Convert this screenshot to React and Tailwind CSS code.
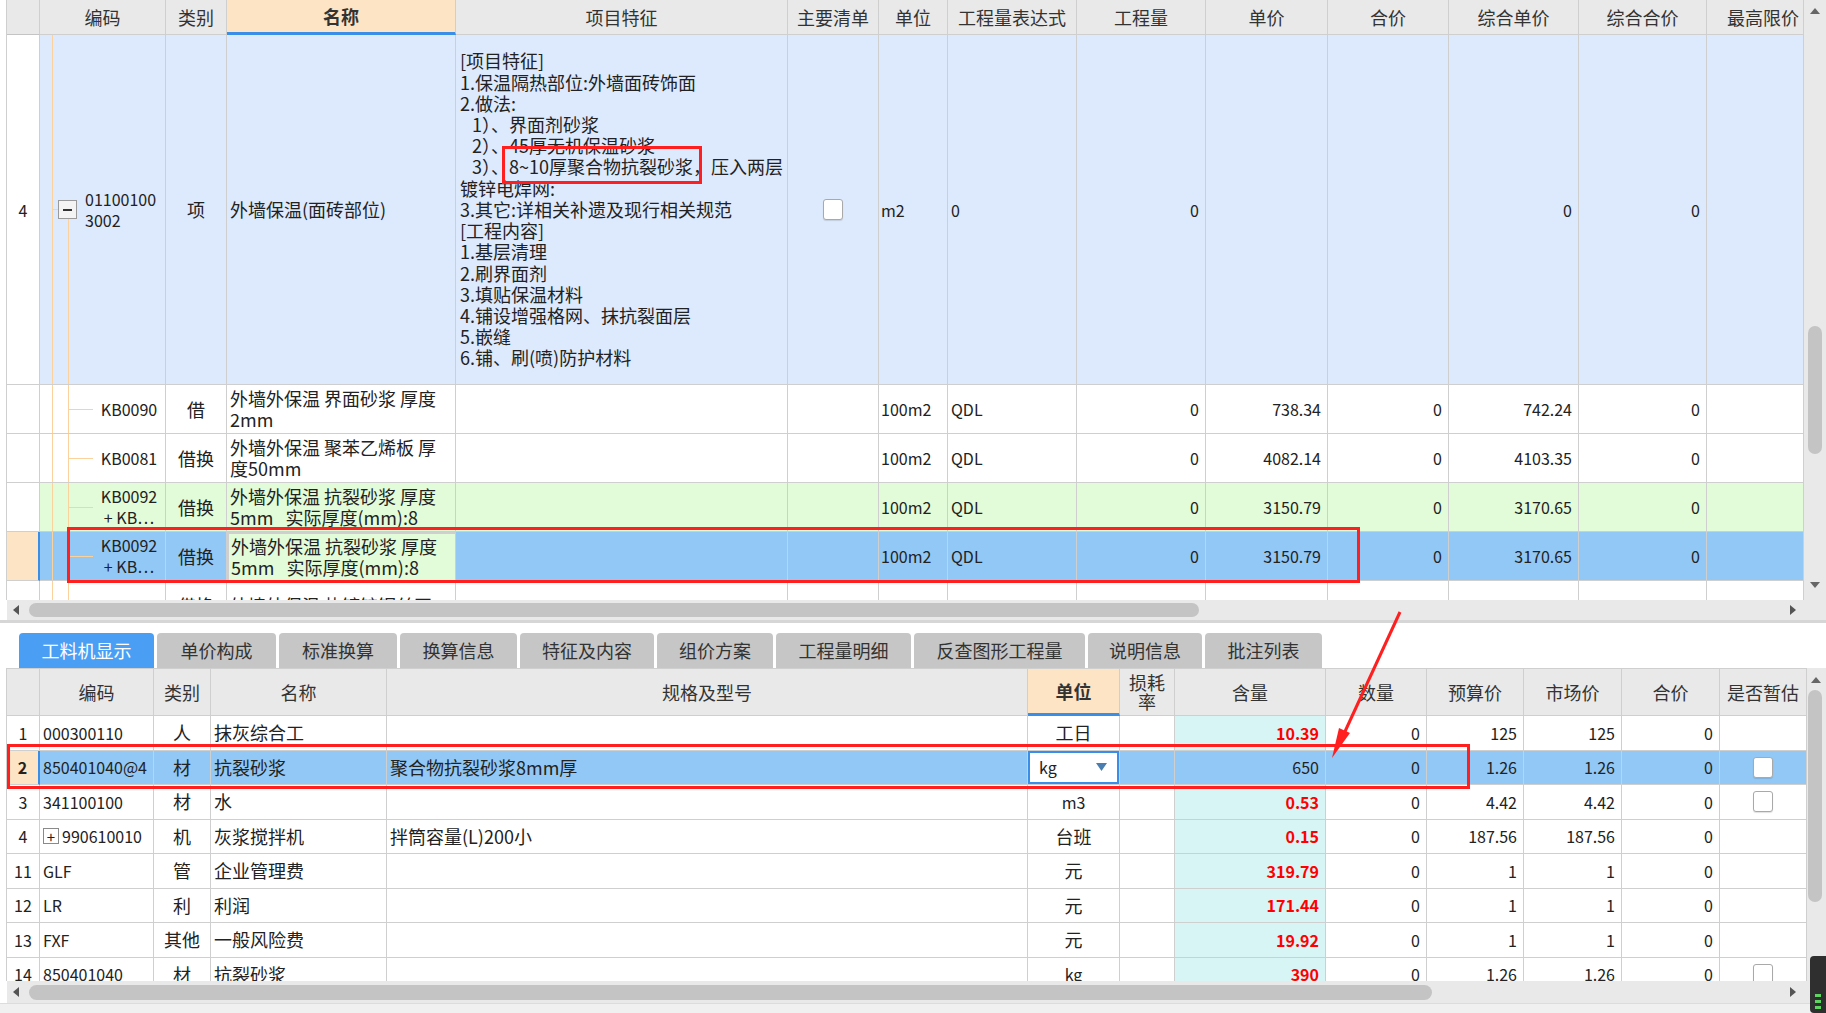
import React from "react";

const F = "font-['Noto_Sans_CJK_SC',sans-serif]";
const TOP =
  "grid grid-cols-[33px_126px_61px_229px_332px_91px_69px_129px_129px_122px_121px_130px_128px_97px]";
const LOW =
  "grid grid-cols-[33px_114px_57px_176px_641px_92px_55px_151px_101px_97px_98px_98px_87px]";
const cell = "border-r border-b border-[#cfcfcf] overflow-hidden flex items-center min-w-0 whitespace-nowrap";
const num = "justify-end pr-[6px] text-[16px]";

function Tri({ dir }) {
  if (dir === "up")
    return (
      <svg width="10" height="6" viewBox="0 0 10 6">
        <polygon points="0,6 5,0 10,6" fill="#666" />
      </svg>
    );
  if (dir === "down")
    return (
      <svg width="10" height="6" viewBox="0 0 10 6">
        <polygon points="0,0 10,0 5,6" fill="#666" />
      </svg>
    );
  if (dir === "left")
    return (
      <svg width="6" height="10" viewBox="0 0 6 10">
        <polygon points="6,0 6,10 0,5" fill="#555" />
      </svg>
    );
  return (
    <svg width="6" height="10" viewBox="0 0 6 10">
      <polygon points="0,0 0,10 6,5" fill="#555" />
    </svg>
  );
}

function Checkbox() {
  return (
    <div className="w-[20px] h-[21px] bg-white border border-[#a9a9a9] rounded-[3px] shadow-[0_1px_1px_rgba(0,0,0,0.12)]" />
  );
}

// [text, indented]
const featureLines = [
  ["[项目特征]", false],
  ["1.保温隔热部位:外墙面砖饰面", false],
  ["2.做法:", false],
  ["1）、界面剂砂浆", true],
  ["2）、45厚无机保温砂浆", true],
  ["3）、8~10厚聚合物抗裂砂浆，压入两层", true],
  ["镀锌电焊网:", false],
  ["3.其它:详相关补遗及现行相关规范", false],
  ["[工程内容]", false],
  ["1.基层清理", false],
  ["2.刷界面剂", false],
  ["3.填贴保温材料", false],
  ["4.铺设增强格网、抹抗裂面层", false],
  ["5.嵌缝", false],
  ["6.铺、刷(喷)防护材料", false],
];

const topRows = [
  { code: ["KB0090"], type: "借", name: ["外墙外保温 界面砂浆 厚度", "2mm"], price: "738.34", cprice: "742.24", bg: "bg-white" },
  { code: ["KB0081"], type: "借换", name: ["外墙外保温 聚苯乙烯板 厚", "度50mm"], price: "4082.14", cprice: "4103.35", bg: "bg-white" },
  { code: ["KB0092", "+ KB…"], type: "借换", name: ["外墙外保温 抗裂砂浆 厚度", "5mm   实际厚度(mm):8"], price: "3150.79", cprice: "3170.65", bg: "bg-[#e2fbd8]" },
  { code: ["KB0092", "+ KB…"], type: "借换", name: ["外墙外保温 抗裂砂浆 厚度", "5mm   实际厚度(mm):8"], price: "3150.79", cprice: "3170.65", bg: "bg-[#92c8f5]", sel: true },
  { code: ["KB0094"], type: "借换", name: ["外墙外保温 热镀锌钢丝网", ""], price: "1155.92", cprice: "1160.87", bg: "bg-white" },
];

const lowRows = [
  { n: "1", code: "000300110", t: "人", name: "抹灰综合工", spec: "", unit: "工日", amt: "10.39", bp: "125", mp: "125" },
  { n: "2", code: "850401040@4", t: "材", name: "抗裂砂浆", spec: "聚合物抗裂砂浆8mm厚", unit: "kg", amt: "650", bp: "1.26", mp: "1.26", sel: true, cb: true },
  { n: "3", code: "341100100", t: "材", name: "水", spec: "", unit: "m3", amt: "0.53", bp: "4.42", mp: "4.42", cb: true },
  { n: "4", code: "990610010", plus: true, t: "机", name: "灰浆搅拌机", spec: "拌筒容量(L)200小", unit: "台班", amt: "0.15", bp: "187.56", mp: "187.56" },
  { n: "11", code: "GLF", t: "管", name: "企业管理费", spec: "", unit: "元", amt: "319.79", bp: "1", mp: "1" },
  { n: "12", code: "LR", t: "利", name: "利润", spec: "", unit: "元", amt: "171.44", bp: "1", mp: "1" },
  { n: "13", code: "FXF", t: "其他", name: "一般风险费", spec: "", unit: "元", amt: "19.92", bp: "1", mp: "1" },
  { n: "14", code: "850401040", t: "材", name: "抗裂砂浆", spec: "", unit: "kg", amt: "390", bp: "1.26", mp: "1.26", cb: true },
];

const tabs = [
  ["工料机显示", "w-[135px]"],
  ["单价构成", "w-[119px]"],
  ["标准换算", "w-[118px]"],
  ["换算信息", "w-[117px]"],
  ["特征及内容", "w-[134px]"],
  ["组价方案", "w-[116px]"],
  ["工程量明细", "w-[135px]"],
  ["反查图形工程量", "w-[171px]"],
  ["说明信息", "w-[114px]"],
  ["批注列表", "w-[117px]"],
];

function TopTable() {
  return (
    <div className="border-l border-[#cfcfcf]">
      {/* header */}
      <div className={`${TOP} h-[35px] bg-[#e9e9e9] text-[18px] text-[#333]`}>
        <div className={`${cell} border-b-[#c4c4c4]`} />
        <div className={`${cell} justify-center`}>编码</div>
        <div className={`${cell} justify-center`}>类别</div>
        <div className={`${cell} justify-center bg-[#fde4c4] font-bold border-b-[3px] border-b-[#3b8ee8]`}>名称</div>
        <div className={`${cell} justify-center`}>项目特征</div>
        <div className={`${cell} justify-center`}>主要清单</div>
        <div className={`${cell} justify-center`}>单位</div>
        <div className={`${cell} justify-center`}>工程量表达式</div>
        <div className={`${cell} justify-center`}>工程量</div>
        <div className={`${cell} justify-center`}>单价</div>
        <div className={`${cell} justify-center`}>合价</div>
        <div className={`${cell} justify-center`}>综合单价</div>
        <div className={`${cell} justify-center`}>综合合价</div>
        <div className={`${cell} justify-end pr-[4px]`}>最高限价</div>
      </div>

      {/* item row 4 */}
      <div className={`${TOP} h-[350px] bg-[#dde9fc] text-[18px] text-[#222]`}>
        <div className={`${cell} justify-center bg-white text-[16px]`}>4</div>
        <div className={`${cell} relative`}>
          <span className="absolute left-[12px] top-0 bottom-0 w-px bg-[#fbd29c]" />
          <span className="absolute left-[12px] top-[174px] w-[6px] h-px bg-[#fbd29c]" />
          <span className="absolute left-[18px] top-[165px] w-[19px] h-[19px] bg-[#f4f4f4] border border-[#9a9a9a] flex items-center justify-center">
            <span className="w-[9px] h-[2px] bg-[#333]" />
          </span>
          <span className="absolute left-[28px] top-[184px] bottom-0 w-px bg-[#fbd29c]" />
          <div className="ml-[45px] text-[16px] leading-[21px]">
            <div>01100100</div>
            <div>3002</div>
          </div>
        </div>
        <div className={`${cell} justify-center`}>项</div>
        <div className={`${cell} pl-[3px]`}>外墙保温(面砖部位)</div>
        <div className={`${cell} pl-[4px]`}>
          <div className="leading-[21.2px] whitespace-pre">
            {featureLines.map(([l, ind], i) => (
              <div key={i} className={ind ? "pl-[12px]" : ""}>
                {l}
              </div>
            ))}
          </div>
        </div>
        <div className={`${cell} justify-center`}>
          <Checkbox />
        </div>
        <div className={`${cell} pl-[2px] text-[16px]`}>m2</div>
        <div className={`${cell} pl-[3px] text-[16px]`}>0</div>
        <div className={`${cell} ${num}`}>0</div>
        <div className={cell} />
        <div className={cell} />
        <div className={`${cell} ${num}`}>0</div>
        <div className={`${cell} ${num}`}>0</div>
        <div className={cell} />
      </div>

      {topRows.map((r, i) => (
        <div key={i} className={`${TOP} h-[49px] ${r.bg} text-[18px] text-[#222]`}>
          <div
            className={
              r.sel
                ? `${cell} bg-[#fde4c4] border-r-[2px] border-r-[#3b8ee8]`
                : `${cell} bg-white`
            }
          />
          <div className={`${cell} relative`}>
            <span className="absolute left-[12px] top-0 bottom-0 w-px bg-[#fbd29c]" />
            <span className="absolute left-[28px] top-0 bottom-0 w-px bg-[#fbd29c]" />
            <span className="absolute left-[28px] top-[24px] w-[25px] h-px bg-[#fbd29c]" />
            <div className="ml-[53px] flex-1 text-center text-[16px] leading-[21px]">
              {r.code.map((c, j) => (
                <div key={j}>{c}</div>
              ))}
            </div>
          </div>
          <div className={`${cell} justify-center`}>{r.type}</div>
          <div
            className={
              r.sel
                ? `${cell} pl-[2px] bg-[#e2fbd8] border-[2px] border-[#7a7a7a]`
                : `${cell} pl-[3px]`
            }
          >
            <div className="leading-[21px] whitespace-pre">
              <div>{r.name[0]}</div>
              <div>{r.name[1]}</div>
            </div>
          </div>
          <div className={cell} />
          <div className={cell} />
          <div className={`${cell} pl-[2px] text-[16px]`}>100m2</div>
          <div className={`${cell} pl-[3px] text-[16px]`}>QDL</div>
          <div className={`${cell} ${num}`}>0</div>
          <div className={`${cell} ${num}`}>{r.price}</div>
          <div className={`${cell} ${num}`}>0</div>
          <div className={`${cell} ${num}`}>{r.cprice}</div>
          <div className={`${cell} ${num}`}>0</div>
          <div className={cell} />
        </div>
      ))}
    </div>
  );
}

function LowTable() {
  return (
    <div className="border-l border-t border-[#cfcfcf]">
      <div className={`${LOW} h-[47px] bg-[#e9e9e9] text-[18px] text-[#333]`}>
        <div className={cell} />
        <div className={`${cell} justify-center`}>编码</div>
        <div className={`${cell} justify-center`}>类别</div>
        <div className={`${cell} justify-center`}>名称</div>
        <div className={`${cell} justify-center`}>规格及型号</div>
        <div className={`${cell} justify-center bg-[#fde4c4] font-bold border-b-[3px] border-b-[#3b8ee8]`}>单位</div>
        <div className={`${cell} justify-center text-center leading-[19px]`}>
          <div>
            <div>损耗</div>
            <div>率</div>
          </div>
        </div>
        <div className={`${cell} justify-center`}>含量</div>
        <div className={`${cell} justify-center`}>数量</div>
        <div className={`${cell} justify-center`}>预算价</div>
        <div className={`${cell} justify-center`}>市场价</div>
        <div className={`${cell} justify-center`}>合价</div>
        <div className={`${cell} justify-center`}>是否暂估</div>
      </div>
      {lowRows.map((r, i) => {
        const latinUnit = r.unit === "kg" || r.unit === "m3";
        return (
          <div
            key={i}
            className={`${LOW} h-[34.5px] text-[18px] text-[#222] ${r.sel ? "bg-[#92c8f5]" : "bg-white"}`}
          >
            <div
              className={
                r.sel
                  ? `${cell} justify-center bg-[#fde4c4] font-bold text-[16px] border-r-[2px] border-r-[#3b8ee8]`
                  : `${cell} justify-center text-[16px]`
              }
            >
              {r.n}
            </div>
            <div className={`${cell} pl-[3px] text-[16px]`}>
              {r.plus && (
                <span className="w-[16px] h-[16px] mr-[3px] border border-[#8a8a8a] bg-white flex items-center justify-center text-[15px] leading-none">
                  +
                </span>
              )}
              {r.code}
            </div>
            <div className={`${cell} justify-center`}>{r.t}</div>
            <div className={`${cell} pl-[3px]`}>{r.name}</div>
            <div className={`${cell} pl-[3px]`}>{r.spec}</div>
            <div className={`${cell} justify-center ${latinUnit ? "text-[16px]" : ""}`}>
              {r.sel ? (
                <div className="w-full h-full bg-white border-[2px] border-[#3b8ee8] flex items-center pl-[9px] pr-[10px]">
                  <span className="flex-1">kg</span>
                  <svg width="11" height="8" viewBox="0 0 11 8">
                    <polygon points="0,0 11,0 5.5,8" fill="#4a7db0" />
                  </svg>
                </div>
              ) : (
                r.unit
              )}
            </div>
            <div className={cell} />
            <div
              className={
                r.sel
                  ? `${cell} ${num} pr-[4px]`
                  : `${cell} ${num} pr-[4px] bg-[#d8f5f5] text-[#ff0000] font-bold`
              }
            >
              {r.amt}
            </div>
            <div className={`${cell} ${num}`}>0</div>
            <div className={`${cell} ${num} pr-[5px]`}>{r.bp}</div>
            <div className={`${cell} ${num} pr-[5px]`}>{r.mp}</div>
            <div className={`${cell} ${num}`}>0</div>
            <div className={`${cell} justify-center`}>{r.cb && <Checkbox />}</div>
          </div>
        );
      })}
    </div>
  );
}

export default function App() {
  return (
    <div className={`${F} relative w-[1826px] h-[1013px] overflow-hidden bg-white select-none`}>
      {/* upper grid */}
      <div className="flex h-[620px]">
        <div className="w-[1804px] flex flex-col">
          <div className="h-[600px] overflow-hidden pl-[6px]">
            <TopTable />
          </div>
          <div className="h-[20px] ml-[7px] bg-[#e9e9e9] flex items-center">
            <span className="ml-[6px] flex">
              <Tri dir="left" />
            </span>
            <div className="ml-[10px] w-[1170px] h-[14px] rounded-full bg-[#c4c4c4]" />
            <div className="flex-1" />
            <span className="mr-[8px] flex">
              <Tri dir="right" />
            </span>
          </div>
        </div>
        <div className="w-[22px] bg-[#e9e9e9] flex flex-col items-center">
          <span className="mt-[8px] flex">
            <Tri dir="up" />
          </span>
          <div className="mt-[312px] w-[14px] h-[128px] rounded-full bg-[#c4c4c4]" />
          <span className="mt-[128px] flex">
            <Tri dir="down" />
          </span>
        </div>
      </div>

      {/* separator + tabs */}
      <div className="h-[3px] bg-[#d6d6d6]" />
      <div className="h-[45px] pt-[10px] pl-[19px] flex gap-[3px] bg-white">
        {tabs.map(([t, w], i) => (
          <div
            key={t}
            className={
              i === 0
                ? `${w} h-[35px] rounded-t-[4px] bg-[#4a9ff5] text-white text-[18px] flex items-center justify-center`
                : `${w} h-[35px] rounded-t-[4px] bg-[#c6c6c6] text-[#333] text-[18px] flex items-center justify-center`
            }
          >
            {t}
          </div>
        ))}
      </div>

      {/* lower grid */}
      <div className="flex h-[335px]">
        <div className="w-[1807px] flex flex-col">
          <div className="h-[313px] overflow-hidden pl-[6px]">
            <LowTable />
          </div>
          <div className="h-[22px] ml-[7px] bg-[#e9e9e9] flex items-center">
            <span className="ml-[6px] flex">
              <Tri dir="left" />
            </span>
            <div className="ml-[10px] w-[1403px] h-[15px] rounded-full bg-[#c4c4c4]" />
            <div className="flex-1" />
            <span className="mr-[11px] flex">
              <Tri dir="right" />
            </span>
          </div>
        </div>
        <div className="w-[19px] bg-[#e9e9e9] flex flex-col">
          <span className="mt-[9px] ml-[4px] flex">
            <Tri dir="up" />
          </span>
          <div className="mt-[7px] ml-[1px] w-[14px] h-[212px] rounded-full bg-[#c4c4c4]" />
        </div>
      </div>
      <div className="h-[10px] bg-[#f0f0f0] border-t border-[#dcdcdc]" />

      {/* tray widget at bottom-right corner */}
      <div className="absolute left-[1810px] top-[956px] w-[16px] h-[57px] bg-[#2f2f2f] rounded-l-[4px] flex flex-col items-center justify-end gap-[3px] pb-[4px]">
        <span className="w-[6px] h-[3px] bg-[#5fd35f]" />
        <span className="w-[6px] h-[3px] bg-[#5fd35f]" />
        <span className="w-[6px] h-[3px] bg-[#5fd35f]" />
      </div>

      {/* red annotation boxes */}
      <div className="absolute left-[502px] top-[146px] w-[200px] h-[38px] border-[3px] border-[#ff1f1f]" />
      <div className="absolute left-[67px] top-[527px] w-[1293px] h-[56px] border-[3px] border-[#ff1f1f]" />
      <div className="absolute left-[7px] top-[744px] w-[1463px] h-[45px] border-[3px] border-[#ff1f1f]" />

      {/* red arrow */}
      <svg className="absolute left-0 top-0 pointer-events-none" width="1826" height="1013">
        <line x1="1400" y1="612" x2="1342" y2="738" stroke="#ff1f1f" strokeWidth="3" />
        <polygon points="1332,758 1350,733 1339,728" fill="#ff1f1f" />
      </svg>
    </div>
  );
}
